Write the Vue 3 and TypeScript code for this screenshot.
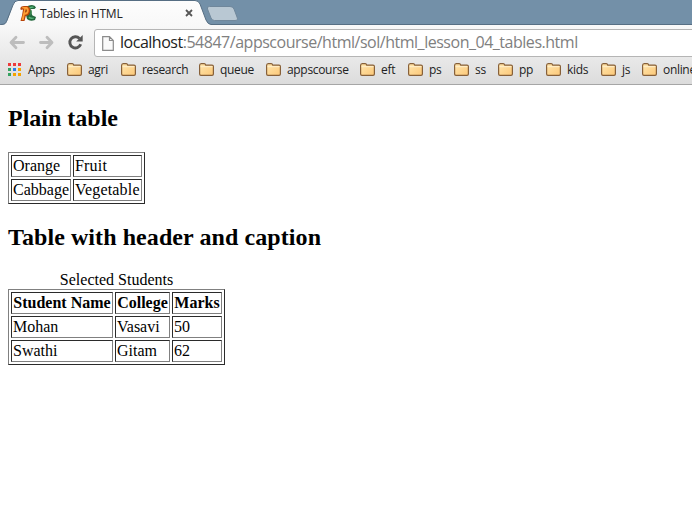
<script setup lang="ts">
interface Bookmark { label: string; width: number }

const bookmarks: Bookmark[] = [
  { label: 'agri', width: 54 },
  { label: 'research', width: 78 },
  { label: 'queue', width: 67 },
  { label: 'appscourse', width: 94 },
  { label: 'eft', width: 48 },
  { label: 'ps', width: 46 },
  { label: 'ss', width: 44 },
  { label: 'pp', width: 48 },
  { label: 'kids', width: 55 },
  { label: 'js', width: 41 },
  { label: 'online', width: 70 },
]

const appColors: string[] = [
  '#ed3b3b', '#ed3b3b', '#ed3b3b',
  '#35a260', '#2b7de9', '#f5a300',
  '#35a260', '#f5a300', '#f5a300',
]

const foods: string[][] = [['Orange', 'Fruit'], ['Cabbage', 'Vegetable']]
const headers: string[] = ['Student Name', 'College', 'Marks']
const students: string[][] = [['Mohan', 'Vasavi', '50'], ['Swathi', 'Gitam', '62']]
</script>

<template>
  <div class="window">
    <header class="chrome">
      <svg class="frame" width="692" height="85" viewBox="0 0 692 85" aria-hidden="true">
        <defs>
          <linearGradient id="bar" gradientUnits="userSpaceOnUse" x1="0" y1="0" x2="0" y2="84">
            <stop offset="0" stop-color="#fdfdfd" /><stop offset="0.3" stop-color="#f8f8f8" /><stop offset="1" stop-color="#dcdcdc" />
          </linearGradient>
        </defs>
        <rect width="692" height="26" fill="#7390a8" />
        <path d="M0 25H.5C5 25 6 24 7.500 20L13 5Q14.500 .5 18 .5H195Q198.500 .5 200 4L206 20Q208 24.500 211 24.500H692V84H0Z" fill="url(#bar)" />
        <path d="M0 24.500H.5C5 24.500 6 23 7.500 19L13 5Q14.500 .5 18 .5H195Q198.500 .5 200 4L206 20Q208 24.500 211 24.500H692" fill="none" stroke="#566e83" />
        <path d="M209.500 6.500H230Q233 6.500 234 9L237 17Q238.500 20.500 235 20.500H214.500Q212 20.500 211 18L207.500 9Q206.500 6.500 209.500 6.500Z" fill="#b9c8d3" stroke="#70879b" />
        <path d="M0 84.500H692" stroke="#a6a6a6" />
      </svg>

      <div class="chrome-rows">
        <div class="tab">
          <svg width="17" height="17" viewBox="0 0 17 17" aria-hidden="true">
            <path d="M6 3C7 .8 9.500 0 12 0Q15 0 16 2.500L14.500 4H11.500C9.500 5 9.500 6.500 11 7.500L12.500 10.500 16 12 15 15Q10 17 7 14L6 10Z" fill="#23683d" />
            <path d="M8 3Q10 1 13 1.500L14 2.500 10.500 3.200 9 5ZM8.500 13Q11 14.500 14 13.500L13.500 12.500Q11 13 9 11.500Z" fill="#58b97c" />
            <path d="M11.500 5Q12.500 7.500 11.500 9.500L9.500 11Q10.500 7.500 9.500 5Z" fill="#35814b" />
            <path d="M.3 3Q1 1 4 1H7Q10.500 1.500 10.200 6 9.500 10.800 5.800 11L4.500 16H.5L2 10.500 3 4.500 .8 5Z" fill="#b84408" />
            <path d="M1.500 3Q2 2 4 2H7Q9.200 3 8.700 6.500 7.800 9.800 4.700 9.800L3.600 15H1.600L4.300 3.800Z" fill="#ff9e32" />
            <path d="M5.700 4.300Q7 4 6.800 6 6.500 7.500 5 7.500Z" fill="#8a3910" />
          </svg>
          <span class="tab-title">Tables in HTML</span>
          <svg class="close" width="8" height="8" viewBox="0 0 8 8" aria-hidden="true"><path d="M1 1 7 7M7 1 1 7" stroke="#565656" stroke-width="1.8" /></svg>
        </div>

        <div class="navigation">
          <svg class="nav-icons" width="86" height="28" viewBox="0 0 86 28" aria-hidden="true">
            <g fill="none" stroke="#bdbdbd" stroke-width="2.800" stroke-linejoin="round" stroke-linecap="round">
              <path d="M16 9.200 11 14.500 16 19.800M11.500 14.500H23.500" />
              <path d="M47 9.200 52 14.500 47 19.800M51.500 14.500H40.500" />
            </g>
            <path d="M79.500 10.500A5.600 5.600 0 1 0 80.700 16.300" fill="none" stroke="#555" stroke-width="2.900" />
            <path d="M82.700 7V13.500H76.200Z" fill="#555" />
          </svg>
          <div class="address">
            <svg width="12" height="15" viewBox="0 0 12 15" aria-hidden="true"><path d="M.7.700H7.500L11.300 4.500V14.300H.7ZM7.500 .7V4.500H11.300" fill="#fafafa" stroke="#8b8b8b" stroke-width="1.200" /></svg>
            <span class="url"><span class="host">localhost</span>:54847/appscourse/html/sol/html_lesson_04_tables.html</span>
          </div>
        </div>

        <nav class="bookmarks">
          <div class="apps">
            <span class="dots"><i v-for="(color, index) in appColors" :key="index" :style="{ background: color }" /></span>
            <span>Apps</span>
          </div>
          <div v-for="item in bookmarks" :key="item.label" class="bookmark" :style="{ width: item.width + 'px' }">
            <svg width="15" height="13" viewBox="0 0 15 13" aria-hidden="true">
              <defs><linearGradient id="folder" x1="0" y1="0" x2="1" y2="1"><stop offset="0" stop-color="#ffe6ae" /><stop offset="1" stop-color="#fcc878" /></linearGradient></defs>
              <path d="M.6 11V2.500Q.6 .6 2.200 .6H5.200Q6.300 .6 6.800 2.200H13Q14.400 2.200 14.400 3.500V11Q14.400 12.400 13 12.400H2Q.6 12.400 .6 11Z" fill="url(#folder)" stroke="#876039" stroke-width="1.200" />
              <path d="M1.500 3.700H13.500" stroke="#fff0ce" />
            </svg>
            <span>{{ item.label }}</span>
          </div>
        </nav>
      </div>
    </header>

    <main class="page">
      <h2>Plain table</h2>
      <table class="foods">
        <colgroup><col class="food-name"><col class="food-type"></colgroup>
        <tbody><tr v-for="row in foods" :key="row[0]"><td v-for="cell in row" :key="cell">{{ cell }}</td></tr></tbody>
      </table>
      <h2 class="captioned-heading">Table with header and caption</h2>
      <table class="students">
        <caption>Selected Students</caption>
        <colgroup><col class="student"><col class="college"><col class="marks"></colgroup>
        <thead><tr><th v-for="header in headers" :key="header">{{ header }}</th></tr></thead>
        <tbody><tr v-for="row in students" :key="row[0]"><td v-for="cell in row" :key="cell">{{ cell }}</td></tr></tbody>
      </table>
    </main>
  </div>
</template>

<style>
body { background: #fff; overflow: hidden; }
</style>

<style scoped>
.window { width: 692px; height: 532px; overflow: hidden; background: #fff; }
.chrome { display: grid; height: 85px; overflow: hidden; font-family: "Open Sans", "Noto Sans", sans-serif; }
.frame, .chrome-rows { grid-area: 1 / 1; min-width: 0; }
.chrome-rows { z-index: 1; width: 692px; }
.tab { display: flex; align-items: center; box-sizing: border-box; height: 26px; width: 210px; padding-left: 20px; font-size: 12px; color: #222; }
.tab-title { width: 145px; margin-left: 3px; white-space: nowrap; letter-spacing: -.2px; }
.close { display: block; }
.navigation { display: flex; height: 31px; padding-top: 2px; box-sizing: border-box; }
.nav-icons { flex: none; }
.address { display: flex; align-items: center; flex: none; box-sizing: border-box; width: 610px; height: 28px; margin: 1px 0 0 8px; padding-left: 7px; border: 1px solid #b5b5b5; border-radius: 3px; background: #fff; }
.url { margin-left: 6px; padding-bottom: 2px; font-size: 16px; line-height: 24px; letter-spacing: -.48px; white-space: nowrap; color: #808080; }
.host { color: #222; }
.bookmarks { display: flex; align-items: center; height: 25px; font-size: 12px; color: #222; letter-spacing: -.32px; }
.apps { display: flex; align-items: center; flex: none; box-sizing: border-box; width: 67px; padding-left: 8px; }
.dots { display: grid; grid-template-columns: repeat(3, 3px); grid-auto-rows: 3px; gap: 2px; margin-right: 7px; }
.bookmark { display: flex; align-items: center; flex: none; }
.bookmark svg { flex: none; margin-right: 6px; }
.page { padding: 0 8px; font-family: "Liberation Serif", "Times New Roman", serif; font-size: 16px; line-height: 18px; color: #000; }
h2 { margin: 0; font-size: 24px; line-height: 27px; }
h2:first-child { padding: 20px 0; }
.captioned-heading { letter-spacing: .08px; }
table { table-layout: fixed; border: 1px solid; border-color: #808080 #2b2b2b #2b2b2b #808080; border-spacing: 2px; }
th, td { box-sizing: border-box; height: 22px; padding: 1px; border: 1px solid; border-color: #2b2b2b #808080 #808080 #2b2b2b; white-space: nowrap; }
td { text-align: left; }
.foods { width: 137px; margin-bottom: 20px; }
.foods td:last-child { letter-spacing: .18px; }
.food-name { width: 60px; }
.food-type { width: 69px; }
.students { width: 217px; margin-top: 20px; }
.student { width: 102px; }
.college { width: 55px; }
.marks { width: 50px; }
caption { padding: 0; }
</style>
